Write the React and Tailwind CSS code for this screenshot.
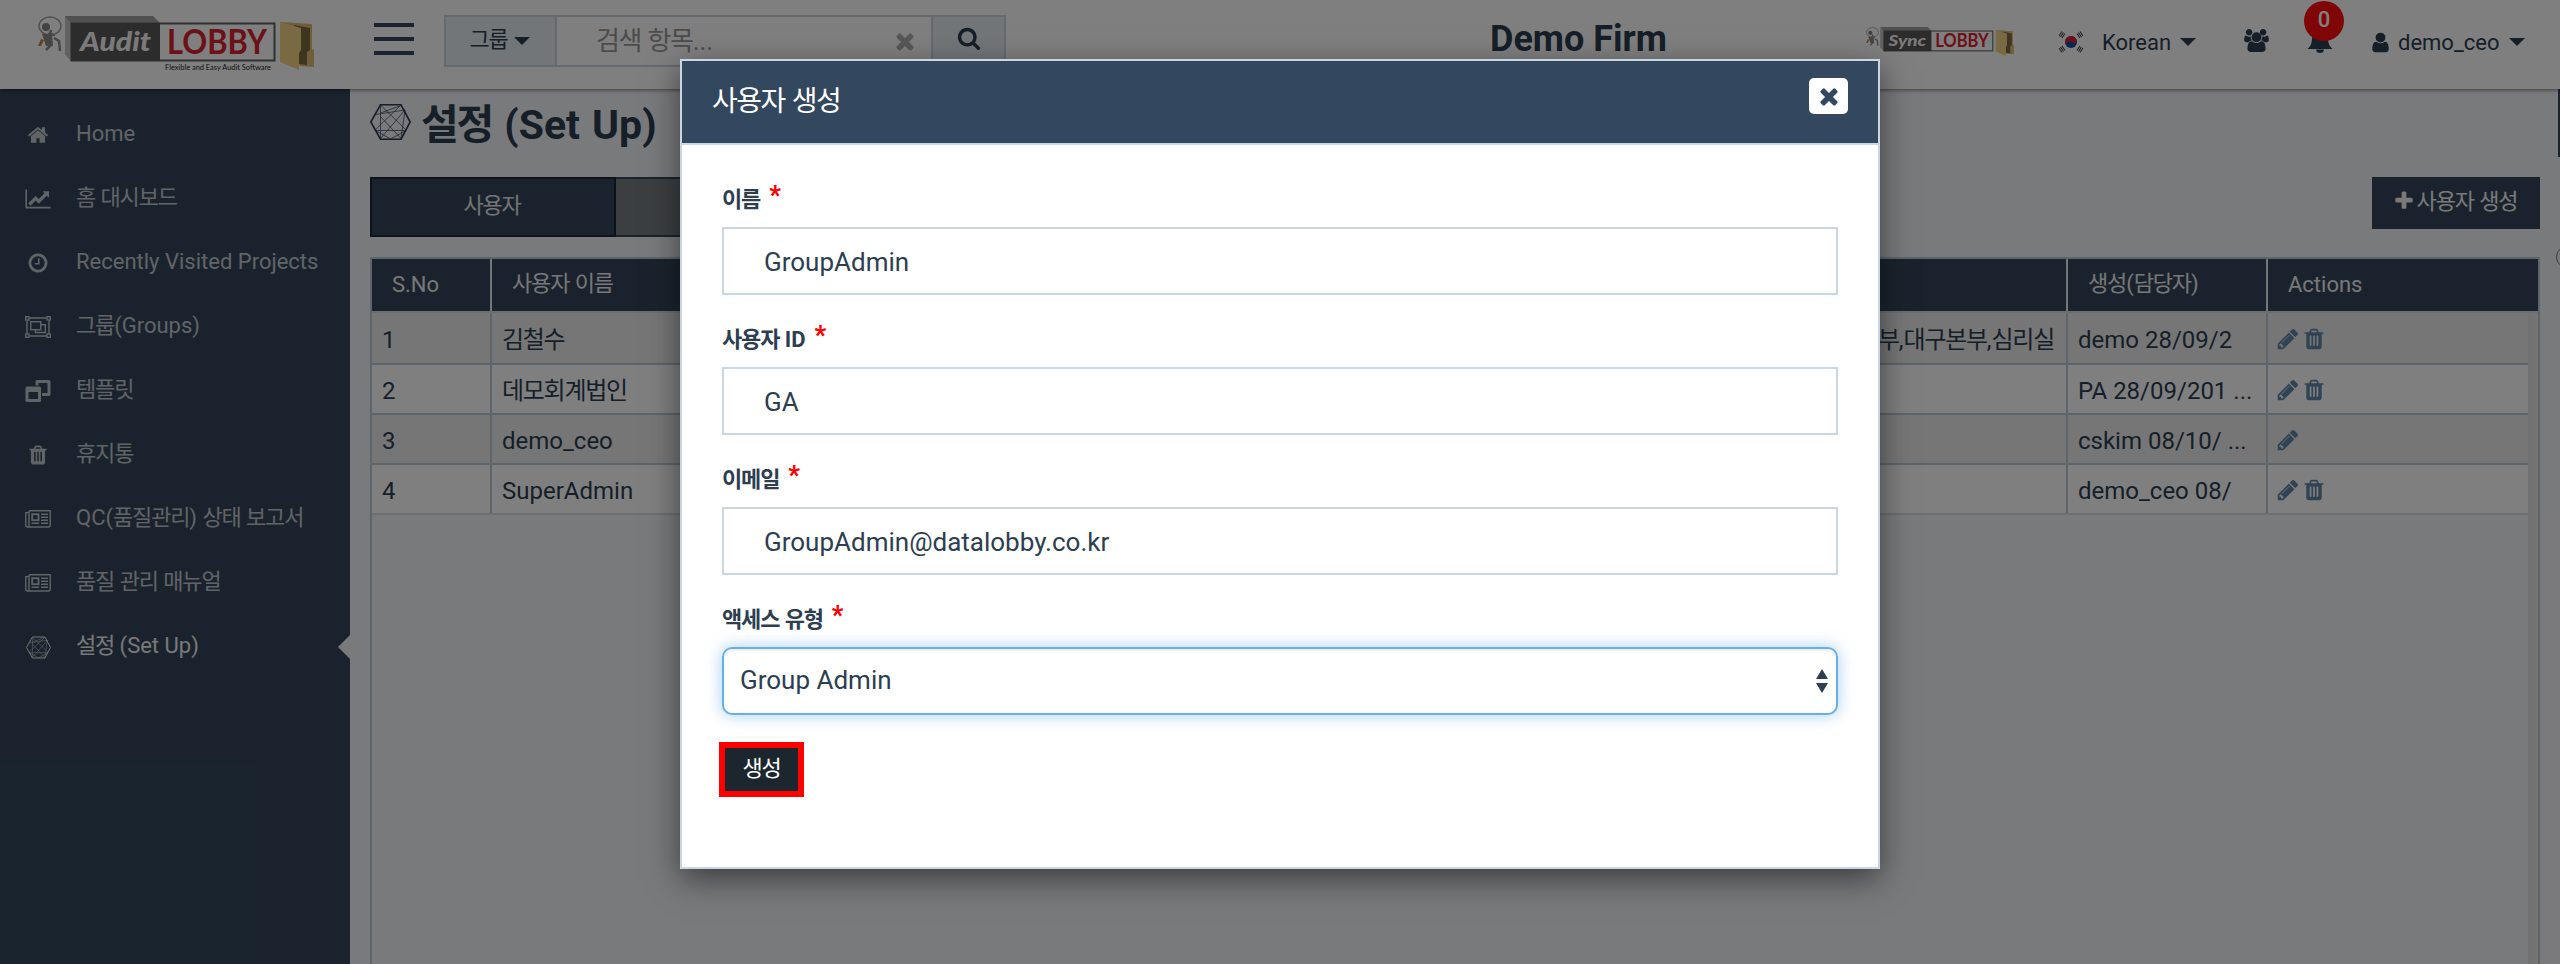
import React from "react";

const P = {
  home: "M1472 992v480q0 26-19 45t-45 19h-384v-384h-256v384h-384q-26 0-45-19t-19-45v-480q0-1 .5-3t.5-3l575-474 575 474q1 2 1 6zm223-69l-62 74q-8 9-21 11h-3q-13 0-21-7l-692-577-692 577q-12 8-24 7-13-2-21-11l-62-74q-8-10-7-23.5t11-21.5l719-599q32-26 76-26t76 26l244 204v-195q0-14 9-23t23-9h192q14 0 23 9t9 23v408l219 182q10 8 11 21.5t-7 23.5z",
  chart: "M2048 1536v128h-2048v-1536h128v1408h1920zm-128-1248v435q0 21-19.5 29.5t-35.5-7.5l-121-121-633 633q-10 10-23 10t-23-10l-233-233-416 416-192-192 585-585q10-10 23-10t23 10l233 233 464-464-121-121q-16-16-7.5-35.5t29.5-19.5h435q14 0 23 9t9 23z",
  clock: "M1024 544v448q0 14-9 23t-23 9h-320q-14 0-23-9t-9-23v-64q0-14 9-23t23-9h224v-352q0-14 9-23t23-9h64q14 0 23 9t9 23zm416 352q0-148-73-273t-198-198-273-73-273 73-198 198-73 273 73 273 198 198 273 73 273-73 198-198 73-273zm224 0q0 209-103 385.5t-279.5 279.5-385.5 103-385.5-103-279.5-279.5-103-385.5 103-385.5 279.5-279.5 385.5-103 385.5 103 279.5 279.5 103 385.5z",
  trash: "M704 1376v-704q0-14-9-23t-23-9h-64q-14 0-23 9t-9 23v704q0 14 9 23t23 9h64q14 0 23-9t9-23zm256 0v-704q0-14-9-23t-23-9h-64q-14 0-23 9t-9 23v704q0 14 9 23t23 9h64q14 0 23-9t9-23zm256 0v-704q0-14-9-23t-23-9h-64q-14 0-23 9t-9 23v704q0 14 9 23t23 9h64q14 0 23-9t9-23zm-544-992h448l-48-117q-7-9-17-11h-317q-10 2-17 11zm928 32v64q0 14-9 23t-23 9h-96v948q0 83-47 143.5t-113 60.5h-832q-66 0-113-58.5t-47-141.5v-952h-96q-14 0-23-9t-9-23v-64q0-14 9-23t23-9h309l70-167q15-37 54-63t79-26h320q40 0 79 26t54 63l70 167h309q14 0 23 9t9 23z",
  pencil: "M491 1536l91-91-235-235-91 91v107h128v128h107zm523-928q0-22-22-22-10 0-17 7l-542 542q-7 7-7 17 0 22 22 22 10 0 17-7l542-542q7-7 7-17zm-54-192l416 416-832 832h-416v-416zm683 96q0 53-37 90l-166 166-416-416 166-165q36-38 90-38 53 0 91 38l235 234q37 39 37 91z",
  search: "M1216 832q0-185-131.5-316.5t-316.5-131.5-316.5 131.5-131.5 316.5 131.5 316.5 316.5 131.5 316.5-131.5 131.5-316.5zm512 832q0 52-38 90t-90 38q-54 0-90-38l-343-342q-179 124-399 124-143 0-273.5-55.5t-225-150-150-225-55.5-273.5 55.5-273.5 150-225 225-150 273.5-55.5 273.5 55.5 225 150 150 225 55.5 273.5q0 220-124 399l343 343q37 37 37 90z",
  times: "M1490 1322q0 40-28 68l-136 136q-28 28-68 28t-68-28l-294-294-294 294q-28 28-68 28t-68-28l-136-136q-28-28-28-68t28-68l294-294-294-294q-28-28-28-68t28-68l136-136q28-28 68-28t68 28l294 294 294-294q28-28 68-28t68 28l136 136q28 28 28 68t-28 68l-294 294 294 294q28 28 28 68z",
  plus: "M1600 736v192q0 40-28 68t-68 28h-416v416q0 40-28 68t-68 28h-192q-40 0-68-28t-28-68v-416h-416q-40 0-68-28t-28-68v-192q0-40 28-68t68-28h416v-416q0-40 28-68t68-28h192q40 0 68 28t28 68v416h416q40 0 68 28t28 68z",
  user: "M1536 1399q0 109-62.5 187t-150.5 78h-854q-88 0-150.5-78t-62.5-187q0-85 8.5-160.5t31.5-152 58.5-131 94-89 134.5-34.5q131 128 313 128t313-128q76 0 134.5 34.5t94 89 58.5 131 31.5 152 8.5 160.5zm-256-887q0 159-112.5 271.5t-271.5 112.5-271.5-112.5-112.5-271.5 112.5-271.5 271.5-112.5 271.5 112.5 112.5 271.5z",
  users: "M529 896q-162 5-265 128h-134q-82 0-138-40.5t-56-118.5q0-353 124-353 6 0 43.5 21t97.5 42.5 119 21.5q67 0 133-23-5 37-5 66 0 139 81 256zm1071 637q0 120-73 189.5t-194 69.5h-874q-121 0-194-69.5t-73-189.5q0-53 3.5-103.5t14-109 26.5-108.5 43-97.5 62-81 85.5-53.5 111.5-20q10 0 43 21.5t73 48 107 48 135 21.5 135-21.5 107-48 73-48 43-21.5q61 0 111.5 20t85.5 53.5 62 81 43 97.5 26.5 108.5 14 109 3.5 103.5zm-1024-1277q0 106-75 181t-181 75-181-75-75-181 75-181 181-75 181 75 75 181zm704 384q0 159-112.5 271.5t-271.5 112.5-271.5-112.5-112.5-271.5 112.5-271.5 271.5-112.5 271.5 112.5 112.5 271.5zm576 225q0 78-56 118.5t-138 40.5h-134q-103-123-265-128 81-117 81-256 0-29-5-66 66 23 133 23 59 0 119-21.5t97.5-42.5 43.5-21q124 0 124 353zm-192-609q0 106-75 181t-181 75-181-75-75-181 75-181 181-75 181 75 75 181z",
};

const Icon = ({ d, box = "0 0 1792 1792", className = "" }) => (
  <svg viewBox={box} fill="currentColor" className={`block shrink-0 ${className}`}>
    <path d={d} />
  </svg>
);

const ObjectGroup = () => (
  <svg viewBox="0 0 26 22" className="block h-[22px] w-[26px]" fill="none" stroke="currentColor" strokeWidth="1.4">
    <path d="M4.500 2H21.500M4.500 20H21.500M2 4.500V17.500M24 4.500V17.500" />
    <rect x=".7" y=".7" width="3.300" height="3.300" />
    <rect x="22" y=".7" width="3.300" height="3.300" />
    <rect x=".7" y="18" width="3.300" height="3.300" />
    <rect x="22" y="18" width="3.300" height="3.300" />
    <rect x="5.700" y="5.700" width="10" height="8" />
    <path d="M15.700 8.700H20.300V16.500H10.500V13.700" />
  </svg>
);

const Clone = () => (
  <svg viewBox="0 0 26 22" className="block h-[22px] w-[26px]" fill="currentColor" fillRule="evenodd">
    <path d="M2 6.500h12.500a1.500 1.500 0 0 1 1.500 1.500v12.500a1.500 1.500 0 0 1-1.500 1.500h-12.500a1.500 1.500 0 0 1-1.500-1.500v-12.500a1.500 1.500 0 0 1 1.500-1.500zM3.500 12v7h9.500v-7z" />
    <path d="M12 0h12a1.500 1.500 0 0 1 1.500 1.500v13a1.500 1.500 0 0 1-1.500 1.500h-7v-3h5.500v-10h-9v2.500h-3v-4a1.500 1.500 0 0 1 1.500-1.500z" />
  </svg>
);

const News = () => (
  <svg viewBox="0 0 26 18" className="block h-[18px] w-[26px]" fill="none" stroke="currentColor" strokeWidth="1.400">
    <path d="M4 .8H25.200V15.600Q25.200 17 23.800 17H2.400Q.8 17 .8 15.400V2.600H4M4 .8V15.400Q4 16.800 2.500 17" />
    <rect x="7.200" y="4.200" width="6.300" height="6" strokeWidth="1.800" />
    <path d="M16 4.300H23M16 7.300H23M16 10.300H23M6.500 13.300H14.200M16 13.300H23" />
  </svg>
);

const Hexagon = ({ className = "" }) => (
  <svg viewBox="0 0 41 36" className={`block shrink-0 ${className}`} fill="none" stroke="currentColor">
    <path d="M10.500 .8H31L40.200 18 31 35.200H10.500L.8 18z" strokeWidth="1.600" />
    <path d="M10.500 2V35M31 34.500L10.500 12.500M31 1.500L10.500 9M10.500 34.500L35 6M31 34.500L35 6M10.500 1L36 26M31 1L5 26M6 26.500H35.500M20.500 35L5.500 26.500M20.500 35L36 26.500M35 6L5.500 10.500" strokeWidth=".7" />
  </svg>
);

const Caret = () => (
  <svg viewBox="0 0 16 8" className="block h-2 w-4 shrink-0" fill="currentColor">
    <path d="M0 0H16L8 8z" />
  </svg>
);

/* Hangul runs are tracked a little tighter than Latin ones. */
const T = ({ children }) => (
  <span>
    {children.split(/([\uAC00-\uD7A3]+)/).map((s, i) =>
      i % 2 ? (
        <span key={i} className="tracking-[-0.053em]">{s}</span>
      ) : (
        s
      )
    )}
  </span>
);

const Logo = ({ word, tagline, className, viewBox }) => (
  <svg viewBox={viewBox} className={`block shrink-0 ${className}`}>
    <g stroke="#c9c9c9" fill="none">
      <path d="M23 14l-2 8 1 8-4 4M26 22l5 3 1 10M17 22l4-4 6 1" stroke="#8d8d8d" strokeWidth="2.500" />
      <ellipse cx="22" cy="10" rx="11" ry="9" strokeWidth="1.500" stroke="#a2a2a2" />
    </g>
    <circle cx="18" cy="11" r="4" fill="#858585" />
    <path d="M14 18h10l1 12h-7z" fill="#8a8a8a" />
    <path d="M13 23l3 1-3 6-3 0z" fill="#c98335" />
    <path d="M37 0H125L132 7H43V45L37 38z" fill="#a0a0a0" />
    <path d="M37 0L43 7V45L37 38z" fill="#c4c4c4" />
    <rect x="43.500" y="7.500" width="203" height="37" fill="#fff" stroke="#606060" strokeWidth="2" />
    <rect x="43" y="7" width="89" height="38" fill="#585858" />
    <text x="52" y="35" textLength={word === "Sync" ? 70 : 71} lengthAdjust="spacingAndGlyphs" fontFamily="Lato, sans-serif" fontWeight="900" fontStyle="italic" fontSize="27" fill="#f4f4f4">{word}</text>
    <text x="139" y="38" textLength="100" lengthAdjust="spacingAndGlyphs" fontFamily="Lato, sans-serif" fontWeight="700" fontSize="34" fill="#d8222e">LOBBY</text>
    {tagline && (
      <text x="137" y="54" textLength="106" lengthAdjust="spacingAndGlyphs" fontFamily="Lato, sans-serif" fontSize="8" fill="#222">{tagline}</text>
    )}
    <path d="M252 6L284 8V33L286 34V51L272 50z" fill="#dcbc74" />
    <path d="M266 9L282 12V34L279 36V49L271 48z" fill="#7d6a40" />
    <path d="M252 6L273 12V34L271 37V54L252 46z" fill="#f3d486" />
  </svg>
);

const Flag = () => (
  <svg viewBox="0 0 26 22" className="block h-[22px] w-[26px] shrink-0">
    <rect width="26" height="22" rx="3" fill="#fff" opacity=".5" />
    <circle cx="13" cy="11" r="6" fill="#0b4da2" />
    <path d="M7.500 13.500a6 6 0 0 1 11-5q.8 2.500-1 3.500t-4.500-1-5.500 2.500z" fill="#d42035" />
    <g stroke="#3f4750" strokeWidth="1.100">
      <path d="M1 5L4 .5M2.500 6L5.500 1.500M4 7L7 2.500" />
      <path d="M22 .5L25 5M20.500 1.500L23.500 6M19 2.500L22 7" />
      <path d="M1 17L4 21.500M2.500 16L5.500 20.500M4 15L7 19.500" />
      <path d="M22 21.500L25 17M20.500 20.500L23.500 16M19 19.500L22 15" />
    </g>
  </svg>
);

const menu = [
  { label: "Home", icon: <Icon d={P.home} className="h-[22px] w-[22px]" /> },
  { label: "홈 대시보드", icon: <Icon d={P.chart} box="0 0 2048 1792" className="h-[22px] w-[26px]" /> },
  { label: "Recently Visited Projects", icon: <Icon d={P.clock} className="h-[22px] w-[22px]" /> },
  { label: "그룹(Groups)", icon: <ObjectGroup /> },
  { label: "템플릿", icon: <Clone /> },
  { label: "휴지통", icon: <Icon d={P.trash} className="h-[22px] w-[22px]" /> },
  { label: "QC(품질관리) 상태 보고서", icon: <News /> },
  { label: "품질 관리 매뉴얼", icon: <News /> },
  { label: "설정 (Set Up)", icon: <Hexagon className="h-[23px] w-[25px]" />, active: true },
];

const rows = [
  { no: "1", name: "김철수", groups: "서울본부,부산본부,대구본부,심리실", by: "demo 28/09/2", del: true },
  { no: "2", name: "데모회계법인", groups: "", by: "PA 28/09/201 ...", del: true },
  { no: "3", name: "demo_ceo", groups: "", by: "cskim 08/10/ ...", del: false },
  { no: "4", name: "SuperAdmin", groups: "", by: "demo_ceo 08/", del: true },
];

const cols = "grid grid-cols-[120px_1576px_200px_1fr]";

function Header() {
  return (
    <header className="relative z-10 flex h-[89px] shrink-0 items-start bg-white text-[22px] text-[#2c3e50] shadow-[0_1px_4px_rgba(0,0,0,0.5)]">
      <Logo word="Audit" tagline="Flexible and Easy Audit Software" viewBox="0 0 290 56" className="mt-4 ml-7 h-14 w-[290px]" />
      <div className="mt-[23px] ml-14 flex w-10 flex-col gap-[10px]">
        <div className="h-1 bg-[#34475e]" />
        <div className="h-1 bg-[#34475e]" />
        <div className="h-1 bg-[#34475e]" />
      </div>
      <div className="mt-[15px] ml-[30px] flex h-[52px] w-[562px] border-2 border-[#c8d5e0]">
        <div className="flex w-[111px] items-center justify-center gap-[6px] border-r-2 border-[#c8d5e0] bg-[#e6edf3] pr-[2px] pb-1">
          <T>그룹</T>
          <span className="pt-1"><Caret /></span>
        </div>
        <div className="flex flex-1 items-center justify-between pr-[13px] pl-[39px] text-[26px] text-[#999]">
          <T>검색 항목...</T>
          <Icon d={P.times} className="h-[26px] w-[26px] text-[#b0b0b0]" />
        </div>
        <div className="flex w-[73px] items-center justify-center border-l-2 border-[#c8d5e0] bg-[#e6edf3] pb-[6px]">
          <Icon d={P.search} className="h-6 w-6" />
        </div>
      </div>
      <div className="mt-[18px] ml-[484px] w-[368px] text-[36px] leading-[42px] font-bold">Demo Firm</div>
      <Logo word="Sync" viewBox="8 0 280 56" className="mt-[27px] ml-[7px] h-[30px] w-[150px]" />
      <div className="mt-[30px] ml-[43px] flex h-6 items-center">
        <Flag />
        <span className="ml-[18px] w-[78px]">Korean</span>
        <Caret />
      </div>
      <Icon d={P.users} box="-64 0 1920 1792" className="mt-[29px] ml-[48px] h-[23px] w-[25px]" />
      <div className="relative mt-[30px] ml-[38px] h-6 w-[26px]">
        <svg viewBox="0 0 26 24" className="block h-6 w-[26px]" fill="currentColor">
          <path d="M13 0Q21 2 21 9Q21 15 25.500 19H.5Q5 15 5 9Q5 2 13 0zM9 19.500H17Q16.500 23 13 23T9 19.500z" />
        </svg>
        <div className="absolute -top-[29px] -left-[3px] flex h-10 w-10 items-center justify-center rounded-full bg-[#ff0a0f] pb-1 text-[22px] font-medium text-white">0</div>
      </div>
      <div className="mt-[30px] ml-[36px] flex h-6 items-center">
        <Icon d={P.user} className="h-[23px] w-[23px]" />
        <span className="ml-[6px] w-[111px]">demo_ceo</span>
        <Caret />
      </div>
    </header>
  );
}

function Sidebar() {
  return (
    <aside className="w-[350px] shrink-0 bg-[#34475b] pt-3">
      {menu.map((m) => (
        <div key={m.label} className={`relative flex h-16 items-center text-[22px] ${m.active ? "text-[#f0f0f0]" : "text-[#c3c8cc]"}`}>
          <div className="flex w-[76px] justify-center pt-1">{m.icon}</div>
          <div className="whitespace-nowrap"><T>{m.label}</T></div>
          {m.active && (
            <svg viewBox="0 0 12 24" className="absolute top-[22px] right-0 h-6 w-3" fill="#f3f4f7">
              <path d="M12 0V24L0 12z" />
            </svg>
          )}
        </div>
      ))}
    </aside>
  );
}

function Main() {
  return (
    <main className="relative flex flex-1 flex-col bg-[#f3f4f7] pr-5 pl-5">
      <h1 className="flex h-[88px] items-center gap-[10px] text-[41px] font-bold text-[#2c3e50]">
        <Hexagon className="-mt-[22px] h-9 w-[41px]" />
        <span className="-mt-[15px] [word-spacing:2px]"><T>설정 (Set Up)</T></span>
      </h1>
      <div className="flex items-start justify-between text-[22px]">
        <div className="flex h-[60px]">
          <div className="flex w-[246px] items-center justify-center border-2 border-[#1c2733] bg-[#34475b] pr-[2px] pb-1 text-[#e8e8e8]"><T>사용자</T></div>
          <div className="w-[246px] border-y-2 border-[#34475b] bg-[#787e83]" />
        </div>
        <div className="flex h-[52px] w-[168px] items-center justify-center gap-[2px] bg-[#34475b] pr-[2px] pb-1 text-[#f2f2f2]">
          <Icon d={P.plus} className="h-[22px] w-[22px]" />
          <span className="whitespace-nowrap"><T>사용자 생성</T></span>
        </div>
      </div>
      <div className="mt-5 flex flex-1 flex-col border-2 border-b-0 border-[#b9cad9] text-[#2c3e50]">
        <div className={`${cols} h-[52px] bg-[#34475b] text-[22px] text-[#eee]`}>
          <div className="flex items-center border-r-2 border-[#eee] pb-[2px] pl-5">S.No</div>
          <div className="flex items-center border-r-2 border-[#eee] pb-[3px] pl-5"><T>사용자 이름</T></div>
          <div className="flex items-center border-r-2 border-[#eee] pb-[3px] pl-5"><T>생성(담당자)</T></div>
          <div className="flex items-center pb-[2px] pl-5">Actions</div>
        </div>
        <div className="flex flex-1 border-t-2 border-[#ddd]">
          <div className="flex-1">
            {rows.map((r, i) => (
              <div key={r.no} className={`${cols} h-[50px] border-b-2 text-2xl whitespace-nowrap first:h-[52px] last:border-[#ddd] ${i % 2 ? "bg-white" : "bg-[#ededed]"} border-[#b9cad9]`}>
                <div className="flex items-center border-r-2 border-[#b9cad9] pt-[3px] pl-[10px]">{r.no}</div>
                <div className="flex items-center justify-between border-r-2 border-[#b9cad9] pt-[3px] pr-3 pl-[10px]">
                  <T>{r.name}</T>
                  <T>{r.groups}</T>
                </div>
                <div className="flex items-center border-r-2 border-[#b9cad9] pt-[3px] pl-[10px]">{r.by}</div>
                <div className="flex items-center gap-[2px] pt-[2px] pl-[8px] text-[#5f86a8]">
                  <Icon d={P.pencil} className="h-6 w-6" />
                  {r.del && <Icon d={P.trash} className="h-6 w-6" />}
                </div>
              </div>
            ))}
          </div>
          <div className="w-[10px] bg-gradient-to-r from-[#e2e2e2] to-[#ececec]" />
        </div>
      </div>
      <div className="absolute top-0 right-0 h-[68px] w-[2px] bg-[#34475b]" />
      <div className="absolute top-[157px] right-0 h-[22px] w-1 overflow-hidden">
        <div className="h-[22px] w-[22px] rounded-full border border-[#777]" />
      </div>
    </main>
  );
}

const Label = ({ children }) => (
  <div className="flex h-[34px] items-start text-[22px] leading-[34px] font-bold">
    <span className="pt-[2px]"><T>{children}</T></span>
    <span className="-mt-[2px] ml-[9px] text-[25px] leading-[34px] font-black text-[#ff0000]">*</span>
  </div>
);

const fields = [
  { label: "이름", value: "GroupAdmin" },
  { label: "사용자 ID", value: "GA" },
  { label: "이메일", value: "GroupAdmin@datalobby.co.kr" },
];

function Modal() {
  return (
    <div className="absolute top-[59px] left-[680px] z-30 flex h-[810px] w-[1200px] flex-col border-2 border-[#c9d6e3] bg-white text-[#2c3e50] shadow-[0_10px_30px_rgba(0,0,0,0.5)]">
      <div className="flex h-[84px] items-start justify-between border-b-2 border-[#c9d6e3] bg-[#33475e] pr-[30px] pl-[30px]">
        <div className="pt-[20px] text-[28px] leading-[42px] text-white"><T>사용자 생성</T></div>
        <div className="mt-[17px] flex h-9 w-[39px] items-center justify-center rounded-[5px] bg-white text-[#33475e]">
          <Icon d={P.times} className="h-[26px] w-[26px]" />
        </div>
      </div>
      <div className="flex flex-col px-10 pt-9">
        {fields.map((f) => (
          <div key={f.label} className="h-[140px]">
            <Label>{f.label}</Label>
            <div className="mt-3 flex h-[68px] items-center border-2 border-[#c9d6e3] pt-[2px] pl-10 text-[26px]">{f.value}</div>
          </div>
        ))}
        <Label>액세스 유형</Label>
        <div className="mt-3 flex h-[68px] items-center justify-between rounded-[10px] border-2 border-[#66afe9] pr-2 pl-4 text-[26px] shadow-[inset_0_2px_2px_rgba(0,0,0,0.075),0_0_16px_rgba(102,175,233,0.6)]">
          <span className="-mt-[2px]">Group Admin</span>
          <svg viewBox="0 0 12 24" className="h-6 w-3" fill="currentColor">
            <path d="M0 10H12L6 0zM0 14H12L6 24z" />
          </svg>
        </div>
        <div className="mt-[27px] -ml-[3px] flex h-[55px] w-[85px] items-center justify-center border-[6px] border-[#ff0000] bg-[#1b262f] pb-[2px] text-[22px] text-white"><T>생성</T></div>
      </div>
    </div>
  );
}

export default function App() {
  return (
    <div className="relative flex h-[964px] w-[2560px] flex-col overflow-hidden font-['Roboto','Noto_Sans_CJK_KR',sans-serif]">
      <Header />
      <div className="flex flex-1">
        <Sidebar />
        <Main />
      </div>
      <div className="absolute inset-0 z-20 bg-black/50" />
      <Modal />
    </div>
  );
}
